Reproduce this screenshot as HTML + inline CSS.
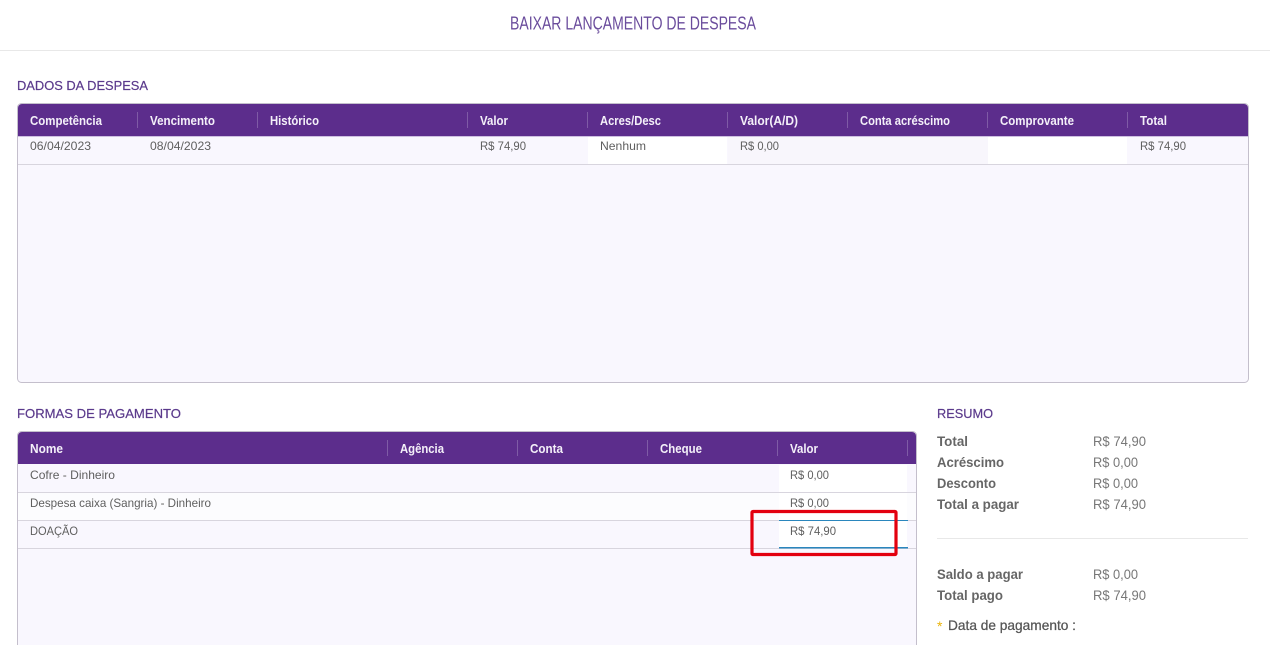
<!DOCTYPE html>
<html lang="pt">
<head>
<meta charset="utf-8">
<title>Baixar lançamento de despesa</title>
<style>
html,body{margin:0;padding:0;background:#fff;width:1270px;height:645px;overflow:hidden}
svg{display:block}
text{font-family:"Liberation Sans",sans-serif}
.h{font-size:12.5px;font-weight:700;fill:#f4f0f9}
.c{font-size:12px;fill:#5f5f5f}
.s{font-size:13px;fill:#5b3a8c;stroke:#5b3a8c;stroke-width:.2px}
.l{font-size:14px;font-weight:700;fill:#666}
.v{font-size:14px;fill:#777}
</style>
</head>
<body>
<svg width="1270" height="645" viewBox="0 0 1270 645" xmlns="http://www.w3.org/2000/svg">
<rect x="0" y="50" width="1270" height="1" fill="#e8e8e8"/>
<text x="510" y="29.500" font-size="18" fill="#6a4c9c" textLength="246" lengthAdjust="spacingAndGlyphs">BAIXAR LANÇAMENTO DE DESPESA</text>

<text class="s" x="17" y="90" textLength="131" lengthAdjust="spacingAndGlyphs">DADOS DA DESPESA</text>
<rect x="17.500" y="103.500" width="1231" height="279" rx="4" fill="#f9f7fe" stroke="#c4bfcc"/>
<path d="M18 136V108a4 4 0 0 1 4-4H1244a4 4 0 0 1 4 4V136Z" fill="#5c2d8c"/>
<rect x="18" y="136" width="1230" height="1" fill="#cdbfe0"/>
<rect x="18" y="164" width="1230" height="1" fill="#d8d5de"/>
<rect x="588" y="137" width="139" height="27" fill="#fff"/>
<rect x="728" y="137" width="260" height="27" fill="#f8f6fc"/>
<rect x="988" y="137" width="139" height="27" fill="#fff"/>
<g fill="#7f5ba6">
<rect x="137" y="112" width="1" height="16"/><rect x="257" y="112" width="1" height="16"/><rect x="467" y="112" width="1" height="16"/><rect x="587" y="112" width="1" height="16"/><rect x="727" y="112" width="1" height="16"/><rect x="847" y="112" width="1" height="16"/><rect x="987" y="112" width="1" height="16"/><rect x="1127" y="112" width="1" height="16"/>
</g>
<text class="h" x="30" y="125" textLength="72" lengthAdjust="spacingAndGlyphs">Competência</text>
<text class="h" x="150" y="125" textLength="65" lengthAdjust="spacingAndGlyphs">Vencimento</text>
<text class="h" x="270" y="125" textLength="49" lengthAdjust="spacingAndGlyphs">Histórico</text>
<text class="h" x="480" y="125" textLength="28" lengthAdjust="spacingAndGlyphs">Valor</text>
<text class="h" x="600" y="125" textLength="61" lengthAdjust="spacingAndGlyphs">Acres/Desc</text>
<text class="h" x="740" y="125" textLength="58" lengthAdjust="spacingAndGlyphs">Valor(A/D)</text>
<text class="h" x="860" y="125" textLength="90" lengthAdjust="spacingAndGlyphs">Conta acréscimo</text>
<text class="h" x="1000" y="125" textLength="74" lengthAdjust="spacingAndGlyphs">Comprovante</text>
<text class="h" x="1140" y="125" textLength="27" lengthAdjust="spacingAndGlyphs">Total</text>
<text class="c" x="30" y="150" textLength="61" lengthAdjust="spacingAndGlyphs">06/04/2023</text>
<text class="c" x="150" y="150" textLength="61" lengthAdjust="spacingAndGlyphs">08/04/2023</text>
<text class="c" x="480" y="150" textLength="46" lengthAdjust="spacingAndGlyphs">R$ 74,90</text>
<text class="c" x="600" y="150" textLength="46" lengthAdjust="spacingAndGlyphs">Nenhum</text>
<text class="c" x="740" y="150" textLength="39" lengthAdjust="spacingAndGlyphs">R$ 0,00</text>
<text class="c" x="1140" y="150" textLength="46" lengthAdjust="spacingAndGlyphs">R$ 74,90</text>

<text class="s" x="17" y="418" textLength="164" lengthAdjust="spacingAndGlyphs">FORMAS DE PAGAMENTO</text>
<rect x="17.500" y="431.500" width="899" height="240" rx="4" fill="#f9f7fe" stroke="#c4bfcc"/>
<path d="M18 464V436a4 4 0 0 1 4-4H912a4 4 0 0 1 4 4V464Z" fill="#5c2d8c"/>
<rect x="18" y="493" width="898" height="27" fill="#fcfcfe"/>
<rect x="18" y="492" width="898" height="1" fill="#d8d5de"/>
<rect x="18" y="520" width="898" height="1" fill="#d8d5de"/>
<rect x="18" y="548" width="898" height="1" fill="#d8d5de"/>
<rect x="779" y="465" width="128" height="27" fill="#fff"/>
<rect x="779" y="493" width="128" height="27" fill="#fff"/>
<rect x="779" y="521" width="128" height="27" fill="#fff"/>
<rect x="779" y="520" width="129" height="1" fill="#2a86bd"/>
<rect x="779" y="547" width="129" height="1.500" fill="#2a86bd"/>
<g fill="#7f5ba6">
<rect x="387" y="440" width="1" height="16"/><rect x="517" y="440" width="1" height="16"/><rect x="647" y="440" width="1" height="16"/><rect x="777" y="440" width="1" height="16"/><rect x="907" y="440" width="1" height="16"/>
</g>
<text class="h" x="30" y="453" textLength="33" lengthAdjust="spacingAndGlyphs">Nome</text>
<text class="h" x="400" y="453" textLength="44" lengthAdjust="spacingAndGlyphs">Agência</text>
<text class="h" x="530" y="453" textLength="33" lengthAdjust="spacingAndGlyphs">Conta</text>
<text class="h" x="660" y="453" textLength="42" lengthAdjust="spacingAndGlyphs">Cheque</text>
<text class="h" x="790" y="453" textLength="28" lengthAdjust="spacingAndGlyphs">Valor</text>
<text class="c" x="30" y="479" textLength="85" lengthAdjust="spacingAndGlyphs">Cofre - Dinheiro</text>
<text class="c" x="30" y="507" textLength="181" lengthAdjust="spacingAndGlyphs">Despesa caixa (Sangria) - Dinheiro</text>
<text class="c" x="30" y="535" textLength="48" lengthAdjust="spacingAndGlyphs">DOAÇÃO</text>
<text class="c" x="790" y="479" textLength="39" lengthAdjust="spacingAndGlyphs">R$ 0,00</text>
<text class="c" x="790" y="507" textLength="39" lengthAdjust="spacingAndGlyphs">R$ 0,00</text>
<text class="c" x="790" y="535" textLength="46" lengthAdjust="spacingAndGlyphs">R$ 74,90</text>
<rect x="752" y="511.500" width="144" height="43" rx="1" fill="none" stroke="#e3000f" stroke-width="3.200"/>

<text class="s" x="937" y="418" textLength="56" lengthAdjust="spacingAndGlyphs">RESUMO</text>
<text class="l" x="937" y="446" textLength="31" lengthAdjust="spacingAndGlyphs">Total</text>
<text class="l" x="937" y="467" textLength="67" lengthAdjust="spacingAndGlyphs">Acréscimo</text>
<text class="l" x="937" y="488" textLength="59" lengthAdjust="spacingAndGlyphs">Desconto</text>
<text class="l" x="937" y="509" textLength="82" lengthAdjust="spacingAndGlyphs">Total a pagar</text>
<text class="v" x="1093" y="446" textLength="53" lengthAdjust="spacingAndGlyphs">R$ 74,90</text>
<text class="v" x="1093" y="467" textLength="45" lengthAdjust="spacingAndGlyphs">R$ 0,00</text>
<text class="v" x="1093" y="488" textLength="45" lengthAdjust="spacingAndGlyphs">R$ 0,00</text>
<text class="v" x="1093" y="509" textLength="53" lengthAdjust="spacingAndGlyphs">R$ 74,90</text>
<rect x="937" y="538" width="311" height="1" fill="#e8e8e8"/>
<text class="l" x="937" y="579" textLength="86" lengthAdjust="spacingAndGlyphs">Saldo a pagar</text>
<text class="l" x="937" y="600" textLength="66" lengthAdjust="spacingAndGlyphs">Total pago</text>
<text class="v" x="1093" y="579" textLength="45" lengthAdjust="spacingAndGlyphs">R$ 0,00</text>
<text class="v" x="1093" y="600" textLength="53" lengthAdjust="spacingAndGlyphs">R$ 74,90</text>
<text x="937" y="631" font-size="14" fill="#eab308">*</text>
<text x="948" y="630" font-size="14" fill="#555" stroke="#555" stroke-width=".25" textLength="128" lengthAdjust="spacingAndGlyphs">Data de pagamento :</text>
</svg>
</body>
</html>
